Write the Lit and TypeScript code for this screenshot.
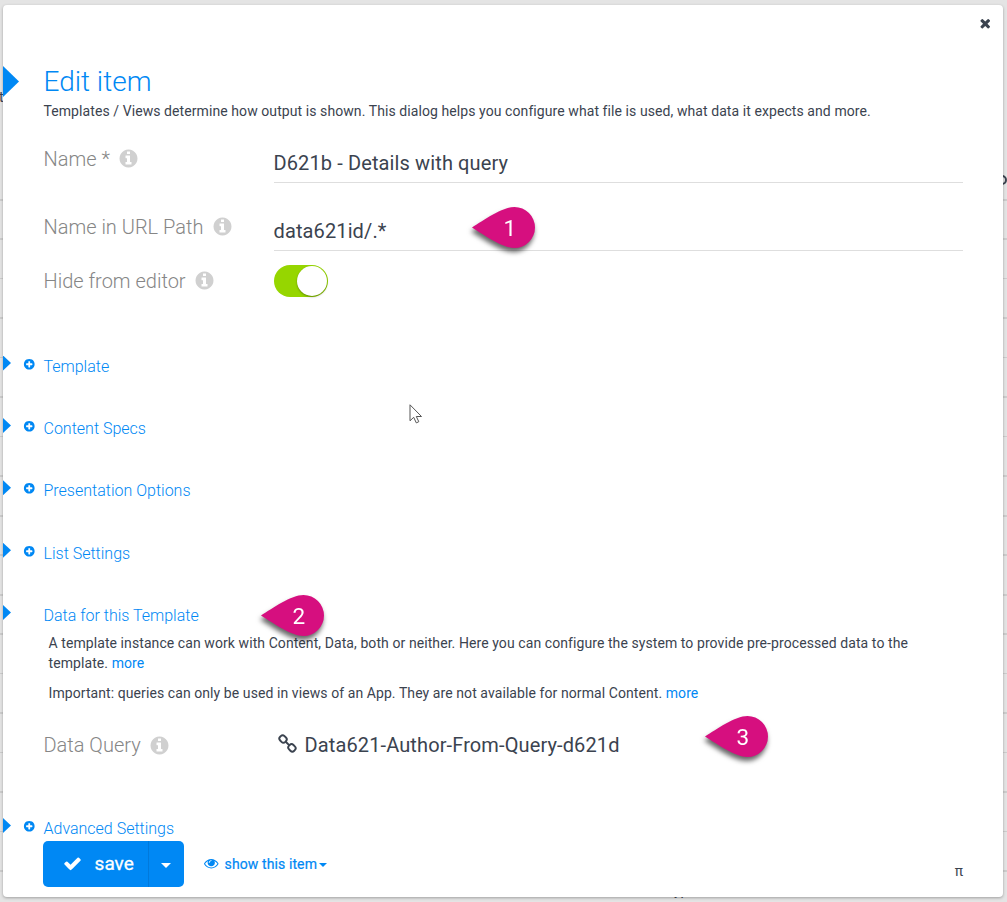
import { LitElement, html, css, svg } from "lit";
import { customElement, property } from "lit/decorators.js";

const ICONS: Record<string, unknown> = {
  check: svg`<path d="M1671 566q0 40-28 68l-724 724-136 136q-28 28-68 28t-68-28l-136-136-362-362q-28-28-28-68t28-68l136-136q28-28 68-28t68 28l294 295 656-657q28-28 68-28t68 28l136 136q28 28 28 68z"/>`,
  times: svg`<path d="M1490 1322q0 40-28 68l-136 136q-28 28-68 28t-68-28l-294-294-294 294q-28 28-68 28t-68-28l-136-136q-28-28-28-68t28-68l294-294-294-294q-28-28-28-68t28-68l136-136q28-28 68-28t68 28l294 294 294-294q28-28 68-28t68 28l136 136q28 28 28 68t-28 68l-294 294 294 294q28 28 28 68z"/>`,
  eye: svg`<path d="M1664 960q-152-236-381-353 61 104 61 225 0 185-131.5 316.5t-316.5 131.5-316.5-131.5-131.5-316.5q0-121 61-225-229 117-381 353 133 205 333.5 326.5t434.5 121.5 434.5-121.5 333.5-326.5zm-720-384q0-20-14-34t-34-14q-125 0-214.5 89.5t-89.5 214.5q0 20 14 34t34 14 34-14 14-34q0-86 61-147t147-61q20 0 34-14t14-34zm848 384q0 34-20 69-140 230-376.5 368.5t-499.5 138.5-499.5-139-376.5-368q-20-35-20-69t20-69q140-229 376.5-368t499.5-139 499.5 139 376.5 368q20 35 20 69z"/>`,
  info: svg`<path d="M1152 1376v-160q0-14-9-23t-23-9h-96v-512q0-14-9-23t-23-9h-320q-14 0-23 9t-9 23v160q0 14 9 23t23 9h96v320h-96q-14 0-23 9t-9 23v160q0 14 9 23t23 9h448q14 0 23-9t9-23zm-128-896v-160q0-14-9-23t-23-9h-192q-14 0-23 9t-9 23v160q0 14 9 23t23 9h192q14 0 23-9t9-23zm640 416q0 209-103 385.5t-279.5 279.5-385.5 103-385.5-103-279.5-279.5-103-385.5 103-385.5 279.5-279.5 385.5-103 385.5 103 279.5 279.5 103 385.5z"/>`,
  plus: svg`<path d="M1344 960v-128q0-26-19-45t-45-19h-256v-256q0-26-19-45t-45-19h-128q-26 0-45 19t-19 45v256h-256q-26 0-45 19t-19 45v128q0 26 19 45t45 19h256v256q0 26 19 45t45 19h128q26 0 45-19t19-45v-256h256q26 0 45-19t19-45zm320-64q0 209-103 385.5t-279.5 279.5-385.5 103-385.5-103-279.5-279.5-103-385.5 103-385.5 279.5-279.5 385.5-103 385.5 103 279.5 279.5 103 385.5z"/>`,
  link: svg`<g fill="none" stroke="currentColor" stroke-width="165" stroke-linejoin="round" stroke-linecap="round"><rect x="205" y="245" width="620" height="530" rx="230" transform="rotate(45 515 510)"/><rect x="965" y="1005" width="620" height="530" rx="230" transform="rotate(45 1275 1270)"/><path d="M770 770L1010 1010"/></g>`,
};

@customElement("fa-icon")
class FaIcon extends LitElement {
  @property() name = "";
  static styles = css`
    :host { display: inline-block; flex: none; width: 21px; height: 21px; }
    svg { display: block; width: 100%; height: 100%; fill: currentColor; }
  `;
  render() {
    return html`<svg viewBox="0 0 1792 1792">${ICONS[this.name]}</svg>`;
  }
}

@customElement("map-pin")
class MapPin extends LitElement {
  @property() label = "";
  static styles = css`
    :host { position: absolute; width: 63px; height: 41px; filter: drop-shadow(-1px 4px 2.5px rgba(0, 0, 0, 0.6)); }
    svg { display: block; width: 63px; height: 41px; overflow: visible; }
    text { font: 22.5px Roboto, sans-serif; fill: #fff; text-anchor: middle; }
  `;
  render() {
    return html`<svg viewBox="0 0 63 41">
      <path fill="#d60f7f" d="M0 20.5C12 13 30 0 42.5 0a20.5 20.5 0 0 1 0 41C30 41 12 28 0 20.5z"/>
      <text x="37.8" y="28.7">${this.label}</text>
    </svg>`;
  }
}

@customElement("app-root")
class AppRoot extends LitElement {
  static styles = css`
    :host {
      display: block; position: relative; box-sizing: border-box; width: 1007px; height: 902px;
      padding: 5px 4px 5px 3px; overflow: hidden; color: #3b434f;
      font-family: Roboto, sans-serif;
      background: #e4e4e4;
    }
    * { box-sizing: border-box; }
    .backdrop { position: absolute; left: 0; top: 199px; width: 1007px; height: 703px;
      background: repeating-linear-gradient(#cdcdcd 0 1.5px, transparent 1.5px 39.5px); }
    .behind { position: absolute; font-size: 14px; line-height: 16px; overflow: hidden; }
    .behind.left { left: -1px; top: 89px; }
    .behind.bottom { left: 674px; top: 882px; }
    .ring { position: absolute; left: 997px; top: 175px; width: 10px; height: 10px; border: 2px solid #3b434f; border-radius: 50%; }
    .dialog { position: relative; height: 892px; background: #fff; border-radius: 4px;
      box-shadow: 0 1px 3px rgba(0, 0, 0, 0.3); padding: 60px 40px 0 40.5px; }
    .close { position: absolute; right: 11px; top: 11px; width: 14.5px; height: 14.5px; }
    h1 { margin: 0; font-weight: 300; font-size: 28px; line-height: 33px; color: #0088f4; position: relative; }
    .arrow { position: absolute; left: -40.5px; top: 1px; width: 16px; height: 31px; background: #0088f4; clip-path: polygon(0 0, 100% 50%, 0 100%); }
    .lead { margin: 3px 0 19.5px; font-size: 14px; line-height: 20px; letter-spacing: 0.08px; }
    .row { display: grid; grid-template-columns: 230px 1fr; height: 43px; margin-bottom: 25px; }
    .label { display: flex; align-items: center; gap: 8.5px; height: 36px; font-size: 20px; font-weight: 300; color: #868686; white-space: nowrap; }
    .label fa-icon { color: #d0d0d0; }
    .value { border-bottom: 1.5px solid #dedede; font-size: 20px; line-height: 44px; height: 42px; letter-spacing: 0.12px; }
    .row.switch { margin: -12.5px 0 0; height: 34px; }
    .switch .label { height: 33px; }
    .toggle { width: 54px; height: 32px; margin: 1px 0 0; border-radius: 16px; background: #96d600; padding: 1px; display: flex; justify-content: flex-end; }
    .knob { width: 30px; height: 30px; border-radius: 50%; background: #fff; box-shadow: 0 1px 2px rgba(0, 0, 0, 0.35); }
    .sections { padding-top: 58.5px; }
    .section { position: relative; height: 62.4px; font-size: 16px; line-height: 20px; font-weight: 300; color: #0088f4; }
    .section .arrow { top: -1px; width: 8px; height: 15px; }
    .section fa-icon { position: absolute; left: -21px; top: 1px; width: 12.5px; height: 12.5px; }
    .section.open { height: 26.5px; }
    .help { margin: 0 0 10px; padding: 0 40px 0 5px; font-size: 14px; line-height: 20px; letter-spacing: 0.08px; }
    .more { color: #0088f4; }
    .row.query { margin: 24.5px 0 0; height: 92px; }
    .query .value { border: 0; display: flex; align-items: center; gap: 7px; padding-left: 3px; height: 35px; }
    .query .value fa-icon { width: 21px; height: 21px; margin-top: -2px; }
    .section.last { height: 21.5px; }
    .footer { display: flex; align-items: center; height: 46px; color: #0088f4; }
    .save { display: flex; width: 141px; height: 46px; margin-left: -0.4px; border-radius: 5px; background: #0088f4; color: #fff; font-size: 19px; font-weight: 400; -webkit-text-stroke: 0.3px currentColor; }
    .main { display: flex; align-items: center; width: 105.5px; padding-left: 20px; gap: 12.5px; border-right: 1px solid #0079dc; }
    .main fa-icon { width: 19px; height: 19px; }
    .drop { flex: 1; display: flex; align-items: center; justify-content: center; padding-top: 4px; }
    .caret { width: 0; height: 0; border: 5px solid transparent; border-top-color: currentColor; border-bottom: 0; }
    .show { display: flex; align-items: center; margin-left: 20px; font-size: 14px; font-weight: 400; letter-spacing: 0.1px; -webkit-text-stroke: 0.2px currentColor; }
    .show fa-icon { width: 14.5px; height: 14.5px; margin-right: 6px; }
    .show .caret { border-width: 4px; border-bottom: 0; margin: 3px 0 0 2px; }
    .pi { margin-left: auto; color: #3b434f; font-size: 14px; padding-top: 14px; }
    .cursor { position: absolute; left: 409px; top: 404px; width: 14px; height: 21px; }
    .p1 { left: 472px; top: 207px; }
    .p2 { left: 261px; top: 595px; }
    .p3 { left: 705px; top: 716px; }
  `;

  private label(text: string) {
    return html`<div class="label"><span>${text}</span><fa-icon name="info"></fa-icon></div>`;
  }

  render() {
    return html`
      <div class="backdrop"></div>
      <span class="behind left">t</span><span class="behind bottom">yp</span>
      <i class="ring"></i>
      <main class="dialog">
        <fa-icon class="close" name="times"></fa-icon>
        <h1><i class="arrow"></i>Edit item</h1>
        <p class="lead">Templates / Views determine how output is shown. This dialog helps you configure what file is used, what data it expects and more.</p>
        <div class="row">${this.label("Name *")}<div class="value">D621b - Details with query</div></div>
        <div class="row">${this.label("Name in URL Path")}<div class="value">data621id/.*</div></div>
        <div class="row switch">${this.label("Hide from editor")}<div class="toggle"><i class="knob"></i></div></div>
        <div class="sections">
          ${["Template", "Content Specs", "Presentation Options", "List Settings"].map(
            (t) => html`<div class="section"><i class="arrow"></i><fa-icon name="plus"></fa-icon><span>${t}</span></div>`
          )}
          <div class="section open"><i class="arrow"></i><span>Data for this Template</span></div>
          <p class="help">A template instance can work with Content, Data, both or neither. Here you can configure the system to provide pre-processed data to the template. <span class="more">more</span></p>
          <p class="help">Important: queries can only be used in views of an App. They are not available for normal Content. <span class="more">more</span></p>
          <div class="row query">${this.label("Data Query")}<div class="value"><fa-icon name="link"></fa-icon>Data621-Author-From-Query-d621d</div></div>
          <div class="section last"><i class="arrow"></i><fa-icon name="plus"></fa-icon><span>Advanced Settings</span></div>
        </div>
        <div class="footer">
          <div class="save"><div class="main"><fa-icon name="check"></fa-icon>save</div><div class="drop"><i class="caret"></i></div></div>
          <div class="show"><fa-icon name="eye"></fa-icon>show this item<i class="caret"></i></div>
          <span class="pi">π</span>
        </div>
      </main>
      <svg class="cursor" viewBox="0 0 14 21"><path d="M1 .8v16l3.7-3.5 2.6 5.6 2.5-1.2-2.5-5.2h5.2z" fill="#fff" stroke="#555" stroke-width="1"/></svg>
      <map-pin class="p1" label="1"></map-pin>
      <map-pin class="p2" label="2"></map-pin>
      <map-pin class="p3" label="3"></map-pin>
    `;
  }
}
